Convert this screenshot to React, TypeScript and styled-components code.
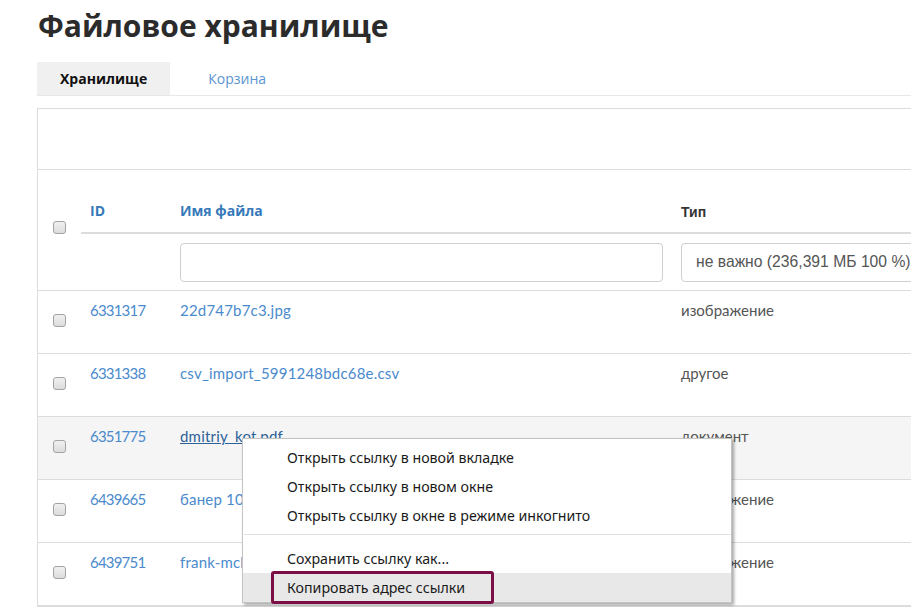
import React from "react";
import styled, { createGlobalStyle } from "styled-components";

const GlobalStyle = createGlobalStyle`
  html, body {
    margin: 0;
    padding: 0;
    background: #fff;
    overflow: hidden;
  }
  body {
    font-family: Lato, "Open Sans", sans-serif;
    color: #333;
  }
`;

const Page = styled.div`
  position: relative;
  width: 1200px;
  padding-left: 37px;
`;

const Title = styled.h1`
  margin: 0;
  padding: 6px 0 0 1px;
  height: 48px;
  font-family: "Open Sans", sans-serif;
  font-weight: 700;
  font-size: 30px;
  line-height: 40px;
  color: #2b2b2b;
`;

const Tabs = styled.div`
  display: flex;
  margin-top: 8px;
  height: 33px;
  border-bottom: 1px solid #e8e8e8;
`;

const Tab = styled.div<{ $active?: boolean }>`
  display: flex;
  align-items: center;
  height: 33px;
  padding: 0 23px 0 ${(p) => (p.$active ? 23 : 38)}px;
  background: ${(p) => (p.$active ? "#f0f0f0" : "transparent")};
  font-family: "Open Sans", sans-serif;
  font-size: 14px;
  font-weight: ${(p) => (p.$active ? 700 : 400)};
  color: ${(p) => (p.$active ? "#111" : "#5b94cf")};
`;

const Panel = styled.div`
  margin-top: 12px;
  border: 1px solid #dcdcdc;
  border-right: none;
`;

const Toolbar = styled.div`
  height: 60px;
  border-bottom: 1px solid #dcdcdc;
`;

const columns = "43px 90px 501px 1fr";

const Head = styled.div`
  display: grid;
  grid-template-columns: ${columns};
  grid-template-rows: 64px 56px;
  border-bottom: 1px solid #dcdcdc;
`;

const CheckCell = styled.div<{ $span?: boolean }>`
  grid-row: ${(p) => (p.$span ? "1 / span 2" : "auto")};
  display: flex;
  align-items: center;
  justify-content: center;
  padding: ${(p) => (p.$span ? "0 0 2px 0" : "0")};
`;

const HeadCell = styled.div<{ $dark?: boolean }>`
  display: flex;
  align-items: flex-end;
  padding: 0 9px 12px;
  border-bottom: 2px solid #dcdcdc;
  font-family: ${(p) => (p.$dark ? '"Liberation Sans", Arial, sans-serif' : '"Open Sans", sans-serif')};
  font-size: 14px;
  font-weight: 700;
  color: ${(p) => (p.$dark ? "#333" : "#3679b8")};
`;

const FilterCell = styled.div`
  display: flex;
  align-items: center;
  padding: 0 9px;
`;

const Input = styled.div`
  box-sizing: border-box;
  width: 100%;
  height: 39px;
  border: 1px solid #cfcfcf;
  border-radius: 4px;
  background: #fff;
`;

const Select = styled.div`
  box-sizing: border-box;
  display: flex;
  align-items: center;
  width: 320px;
  height: 39px;
  padding-left: 14px;
  border: 1px solid #cfcfcf;
  border-radius: 4px;
  font-family: "Liberation Sans", Arial, sans-serif;
  font-size: 15.7px;
  color: #555;
  white-space: nowrap;
`;

const Row = styled.div<{ $hover?: boolean }>`
  display: grid;
  grid-template-columns: ${columns};
  height: 62px;
  border-bottom: 1px solid #dcdcdc;
  background: ${(p) => (p.$hover ? "#f5f5f5" : "#fff")};
`;

const Cell = styled.div<{ $muted?: boolean }>`
  padding: 9px 9px 0;
  font-size: 15px;
  line-height: 20px;
  color: ${(p) => (p.$muted ? "#555" : "#4a8acd")};
  white-space: nowrap;
`;

const IdCell = styled(Cell)`
  letter-spacing: -0.8px;
`;

const FileLink = styled.span<{ $hover?: boolean }>`
  color: ${(p) => (p.$hover ? "#2d6299" : "#4a8acd")};
  text-decoration: ${(p) => (p.$hover ? "underline" : "none")};
  letter-spacing: 0.2px;
`;

const Box = styled.span`
  box-sizing: border-box;
  display: block;
  width: 13px;
  height: 13px;
  margin-top: -4px;
  border: 1px solid #a3a3a3;
  border-radius: 3px;
  background: linear-gradient(#f0f0f0, #dcdcdc);
`;

const Menu = styled.div`
  position: absolute;
  left: 242px;
  top: 438px;
  width: 488px;
  padding-top: 4px;
  background: #fff;
  border: 1px solid #c4c4c4;
  box-shadow: 2px 2px 3px rgba(0, 0, 0, 0.35);
  font-family: "Noto Sans", "Open Sans", sans-serif;
  font-size: 14.2px;
  color: #1a1a1a;
`;

const MenuItem = styled.div<{ $active?: boolean }>`
  position: relative;
  display: flex;
  align-items: center;
  height: 29px;
  padding-left: 44px;
  background: ${(p) => (p.$active ? "#e8e8e8" : "transparent")};
`;

const Separator = styled.div`
  margin: 4px 0 9px 1px;
  border-top: 1px solid #e2e2e2;
`;

const Highlight = styled.span`
  position: absolute;
  left: 28px;
  top: -2px;
  width: 223px;
  height: 33px;
  box-sizing: border-box;
  border: 3px solid #7a0e45;
  border-radius: 3px;
`;

const files = [
  { id: "6331317", name: "22d747b7c3.jpg", type: "изображение" },
  { id: "6331338", name: "csv_import_5991248bdc68e.csv", type: "другое" },
  { id: "6351775", name: "dmitriy_kot.pdf", type: "документ", hover: true },
  { id: "6439665", name: "банер 1000х300.jpg", type: "изображение" },
  { id: "6439751", name: "frank-mclaughlin.jpg", type: "изображение" },
];

const menuTop = [
  "Открыть ссылку в новой вкладке",
  "Открыть ссылку в новом окне",
  "Открыть ссылку в окне в режиме инкогнито",
];

export default function App() {
  return (
    <>
      <GlobalStyle />
      <Page>
        <Title>Файловое хранилище</Title>
        <Tabs>
          <Tab $active>Хранилище</Tab>
          <Tab>Корзина</Tab>
        </Tabs>
        <Panel>
          <Toolbar />
          <Head>
            <CheckCell $span>
              <Box />
            </CheckCell>
            <HeadCell>ID</HeadCell>
            <HeadCell>Имя файла</HeadCell>
            <HeadCell $dark>Тип</HeadCell>
            <FilterCell />
            <FilterCell>
              <Input />
            </FilterCell>
            <FilterCell>
              <Select>не важно (236,391 МБ 100 %)</Select>
            </FilterCell>
          </Head>
          {files.map((f) => (
            <Row key={f.id} $hover={f.hover}>
              <CheckCell>
                <Box />
              </CheckCell>
              <IdCell>{f.id}</IdCell>
              <Cell>
                <FileLink $hover={f.hover}>{f.name}</FileLink>
              </Cell>
              <Cell $muted>{f.type}</Cell>
            </Row>
          ))}
        </Panel>
        <Menu>
          {menuTop.map((t) => (
            <MenuItem key={t}>{t}</MenuItem>
          ))}
          <Separator />
          <MenuItem>Сохранить ссылку как...</MenuItem>
          <MenuItem $active>
            Копировать адрес ссылки
            <Highlight />
          </MenuItem>
        </Menu>
      </Page>
    </>
  );
}
